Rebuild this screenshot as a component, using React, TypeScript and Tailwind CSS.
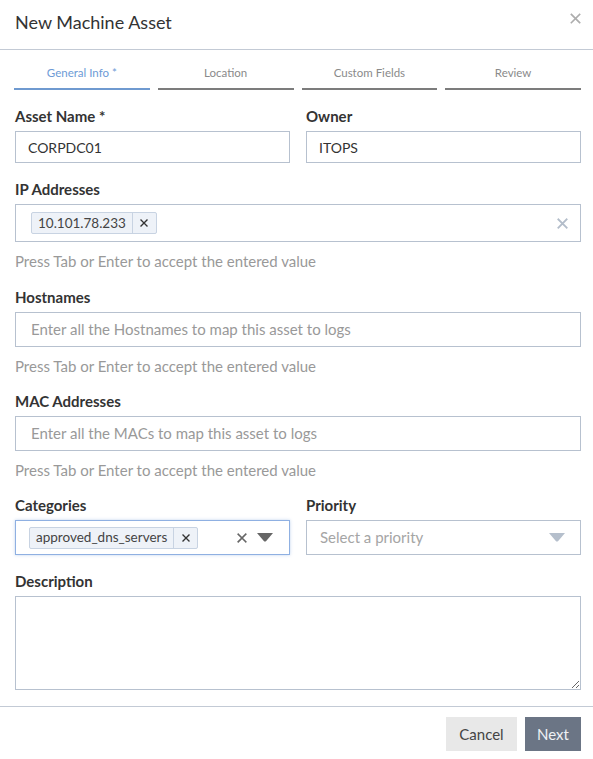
import type { ReactNode } from "react";

const font = { fontFamily: "Lato, 'Liberation Sans', sans-serif" };

function XIcon({ className, size = 12, stroke = 2 }: { className?: string; size?: number; stroke?: number }) {
  return (
    <svg width={size} height={size} viewBox="0 0 12 12" className={className} aria-hidden>
      <path d="M1.5 1.5 L10.5 10.5 M10.5 1.5 L1.5 10.5" stroke="currentColor" strokeWidth={stroke} strokeLinecap="square" fill="none" />
    </svg>
  );
}

function Caret({ className }: { className?: string }) {
  return (
    <svg width="16" height="9" viewBox="0 0 16 9" className={className} aria-hidden>
      <path d="M0 0 H16 L9.2 8 Q8 9 6.8 8 Z" fill="currentColor" />
    </svg>
  );
}

function Label({ children }: { children: ReactNode }) {
  return <div className="mb-[5px] text-[15px] font-bold leading-[20px] text-[#333]">{children}</div>;
}

function Help() {
  return <p className="mt-[9px] text-[15px] leading-[20px] text-[#999]">Press Tab or Enter to accept the entered value</p>;
}

function Chip({ text }: { text: string }) {
  return (
    <span className="inline-flex h-[22px] items-stretch rounded-[2px] border border-[#c8d3e2] bg-[#eef2f8] text-[13.5px] text-[#444]">
      <span className="flex items-center px-[6px]">{text}</span>
      <span className="flex w-[24px] items-center justify-center border-l border-[#c8d3e2] text-[#333]">
        <XIcon size={8} stroke={2} />
      </span>
    </span>
  );
}

const tabs = ["General Info *", "Location", "Custom Fields", "Review"];

export default function App() {
  return (
    <div style={font} className="h-[759px] w-[593px] bg-white">
      <header className="flex h-[50px] items-start justify-between border-b border-[#c3cad5] pl-[15px] pr-[12px] pt-[9px]">
        <h1 className="text-[18px] leading-[26px] text-[#333]">New Machine Asset</h1>
        <XIcon className="mt-[4px] text-[#adadad]" size={11} stroke={1.8} />
      </header>

      <nav className="grid grid-cols-4 gap-[8px] pl-[14px] pr-[12px] pt-[15px]">
        {tabs.map((t, i) => (
          <div
            key={t}
            className={
              i === 0
                ? "border-b-2 border-[#6f9ad0] pb-[7px] text-center text-[11.5px] leading-[16px] text-[#6d9bd6]"
                : "border-b-2 border-[#7c7c7c] pb-[7px] text-center text-[11.5px] leading-[16px] text-[#8a8a8a]"
            }
          >
            {t}
          </div>
        ))}
      </nav>

      <main className="pl-[15px] pr-[12px] pt-[16px]">
        <div className="grid grid-cols-2 gap-[16px]">
          <div>
            <Label>Asset Name *</Label>
            <div className="flex h-[32px] items-center border border-[#b7c1cf] px-[12px] text-[14px] text-[#333]">CORPDC01</div>
          </div>
          <div>
            <Label>Owner</Label>
            <div className="flex h-[32px] items-center border border-[#b7c1cf] px-[12px] text-[14px] text-[#333]">ITOPS</div>
          </div>
        </div>

        <div className="mt-[16px]">
          <Label>IP Addresses</Label>
          <div className="flex h-[38px] items-center justify-between border border-[#b7c1cf] pl-[15px] pr-[12px]">
            <Chip text="10.101.78.233" />
            <XIcon className="text-[#b3bdca]" size={11} stroke={2} />
          </div>
          <Help />
        </div>

        <div className="mt-[16px]">
          <Label>Hostnames</Label>
          <div className="flex h-[35px] items-center border border-[#b7c1cf] px-[15px] text-[15px] text-[#999]">
            Enter all the Hostnames to map this asset to logs
          </div>
          <Help />
        </div>

        <div className="mt-[15px]">
          <Label>MAC Addresses</Label>
          <div className="flex h-[35px] items-center border border-[#b7c1cf] px-[15px] text-[15px] text-[#999]">
            Enter all the MACs to map this asset to logs
          </div>
          <Help />
        </div>

        <div className="mt-[15px] grid grid-cols-2 gap-[16px]">
          <div>
            <Label>Categories</Label>
            <div className="flex h-[35px] items-center border border-[#8fb0e2] pl-[13px] pr-[16px] shadow-[0_0_3px_rgba(120,160,220,0.45)]">
              <Chip text="approved_dns_servers" />
              <div className="ml-auto flex items-center gap-[10px] text-[#666]">
                <XIcon size={10} stroke={2} />
                <Caret />
              </div>
            </div>
          </div>
          <div>
            <Label>Priority</Label>
            <div className="flex h-[35px] items-center justify-between border border-[#b7c1cf] pl-[13px] pr-[15px] text-[15px] text-[#a5a5a5]">
              Select a priority
              <Caret className="text-[#b5bfcc]" />
            </div>
          </div>
        </div>

        <div className="mt-[16px]">
          <Label>Description</Label>
          <textarea readOnly className="block h-[94px] w-full resize-y border border-[#b7c1cf] outline-none" />
        </div>
      </main>

      <footer className="mt-[16px] flex justify-end gap-[8px] border-t border-[#c3cad5] pr-[12px] pt-[10px]">
        <button className="h-[34px] w-[71px] bg-[#e8e8e8] text-[15px] text-[#444]">Cancel</button>
        <button className="h-[34px] w-[56px] bg-[#6b7585] text-[15px] text-[#eef1f5]">Next</button>
      </footer>
    </div>
  );
}
